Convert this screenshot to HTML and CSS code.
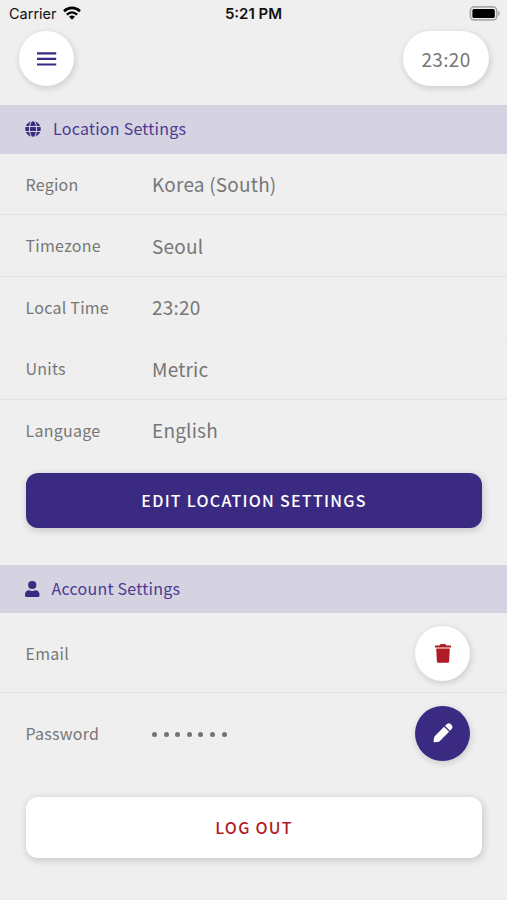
FILE: index.html
```html
<!DOCTYPE html>
<html lang="en">
<head>
<meta charset="utf-8">
<title>Settings</title>
<link rel="stylesheet" href="styles.css">
</head>
<body>
<div class="status">
  <div class="carrier"><span>Carrier</span>
    <svg class="wifi" width="18" height="14" viewBox="0 0 18 14" fill="none" stroke="#000" stroke-width="2.6"><path d="M1 5.200C5.600.8 12.400.8 17 5.200"/><path d="M3.900 8.600C7 5.700 11 5.700 14.100 8.600"/><path d="M9 13.800 6.100 10.700C7.700 9.200 10.300 9.200 11.900 10.700Z" fill="#000" stroke="none"/></svg>
  </div>
  <div class="clock">5:21 PM</div>
  <div class="power">
    <svg width="31" height="15" viewBox="0 0 31 15"><rect x="1.400" y=".9" width="26.400" height="13" rx="3.600" fill="#efefef" stroke="#a9a9a9" stroke-width="1.600"/><rect x="3.400" y="3" width="22.400" height="9" rx="1.600"/><path d="M29.200 5v5c2-.8 2-4.200 0-5z" fill="#a0a0a0"/></svg>
  </div>
</div>
<header class="topbar">
  <button class="round" aria-label="Menu"><svg width="20" height="14" viewBox="0 0 20 14" fill="#3b2a82"><path d="M0 .2h19.200v2.200H0zM0 5.800h19.200V8H0zM0 11.400h19.200v2.200H0z"/></svg></button>
  <div class="time-pill">23:20</div>
</header>
<section>
  <h2 class="band"><svg width="16" height="16" viewBox="0 0 496 512" fill="#3b2a82"><path d="M336.500 160C322 70.700 287.800 8 248 8s-74 62.700-88.500 152h177zM152 256c0 22.200 1.200 43.500 3.300 64h185.300c2.100-20.500 3.300-41.800 3.300-64s-1.200-43.500-3.300-64H155.300c-2.100 20.500-3.300 41.800-3.300 64zm324.700-96c-28.600-67.900-86.500-120.400-158-141.600 24.400 33.800 41.200 84.700 50 141.600h108zM177.200 18.400C105.800 39.600 47.800 92.100 19.300 160h108c8.700-56.900 25.500-107.800 49.900-141.600zM487.400 192H372.700c2.100 21 3.300 42.500 3.300 64s-1.200 43-3.300 64h114.600c5.500-20.500 8.600-41.800 8.600-64s-3.100-43.500-8.500-64zM120 256c0-21.500 1.200-43 3.300-64H8.600C3.200 212.500 0 233.800 0 256s3.200 43.500 8.600 64h114.600c-2-21-3.200-42.500-3.200-64zm39.500 96c14.500 89.300 48.700 152 88.500 152s74-62.700 88.500-152h-177zm159.300 141.600c71.400-21.200 129.400-73.700 158-141.600h-108c-8.800 56.900-25.600 107.800-50 141.600zM19.300 352c28.600 67.900 86.500 120.400 158 141.600-24.400-33.800-41.200-84.700-50-141.600h-108z"/></svg><span>Location Settings</span></h2>
  <dl class="rows">
    <div class="row"><dt>Region</dt><dd>Korea (South)</dd></div>
    <div class="row"><dt>Timezone</dt><dd>Seoul</dd></div>
    <div class="row faint"><dt>Local Time</dt><dd>23:20</dd></div>
    <div class="row"><dt>Units</dt><dd>Metric</dd></div>
    <div class="row last"><dt>Language</dt><dd>English</dd></div>
  </dl>
  <button class="wide primary">EDIT LOCATION SETTINGS</button>
</section>
<section class="account">
  <h2 class="band person"><svg width="14.500" height="16" viewBox="0 0 14 16" preserveAspectRatio="none" fill="#3b2a82"><circle cx="7" cy="4" r="4"/><path d="M4 9.200c1.800.9 4.200.9 6 0 2.500 0 4 1.800 4 4v1.300c0 .9-.6 1.500-1.500 1.500h-11C.6 16 0 15.400 0 14.500v-1.300c0-2.200 1.500-4 4-4z"/></svg><span>Account Settings</span></h2>
  <dl class="rows tall">
    <div class="row"><dt>Email</dt><dd></dd><button class="round" aria-label="Delete"><svg width="16" height="19" viewBox="0 0 16 19" fill="#b01c26"><path d="M0 1.400h4.600L5.700.1h4.600l1.100 1.300H16v2.200H0zM1.200 4.400h13.600l-.7 12.900c-.1 1-.7 1.500-1.600 1.500h-9c-.9 0-1.500-.5-1.600-1.500z"/></svg></button></div>
    <div class="row last"><dt>Password</dt><dd class="dots"><i></i><i></i><i></i><i></i><i></i><i></i><i></i></dd><button class="round dark" aria-label="Edit"><svg width="20" height="20" viewBox="0 0 20 20" fill="#fff"><path d="M11.100 3.700 16.100 8.700 6.900 17.900Q6 18.800 4.800 19L1.600 19.300Q.5 19.300.6 18.200L1 15Q1.100 13.800 2 12.900zM12 2.800 13.700 1.200Q15.800-.5 17.800 1.200L18.600 2Q20.300 4 18.600 6.100L17 7.800z"/></svg></button></div>
  </dl>
  <button class="wide logout">LOG OUT</button>
</section>
</body>
</html>
```
FILE: styles.css
```css
* { box-sizing: border-box; }
body { margin: 0; width: 507px; height: 900px; overflow: hidden; background: #efefef; color: #777; font-family: "Noto Sans CJK JP", "Noto Sans", sans-serif; }
button { border: 0; padding: 0; font: inherit; }
h2, dl, dt, dd { margin: 0; font-weight: 400; }
svg { display: block; flex: none; }
.status { height: 31px; padding: 0 7px 4px 9px; display: grid; grid-template-columns: 1fr auto 1fr; align-items: center; color: #111; font: 14.500px Inter, sans-serif; }
.carrier { display: flex; align-items: center; gap: 6px; }
.wifi { margin-top: -1px; }
.clock { font-weight: 600; font-size: 15px; margin-left: -2px; }
.power { display: flex; justify-content: flex-end; }
.topbar { height: 74px; padding: 0 18px 0 19px; display: flex; justify-content: space-between; align-items: flex-start; }
.round { width: 55px; height: 55px; flex: none; border-radius: 50%; background: #fff; display: flex; align-items: center; justify-content: center; box-shadow: 1px 2px 7px rgba(0,0,0,.16); }
.round.dark { background: #3b2a82; }
.time-pill { width: 86px; height: 55px; border-radius: 28px; background: #fff; display: flex; align-items: center; justify-content: center; font-size: 19px; letter-spacing: .3px; box-shadow: 1px 2px 7px rgba(0,0,0,.16); }
.band { height: 48.500px; padding-left: 25px; display: flex; align-items: center; gap: 12px; background: #d5d2e1; color: #4b3a91; font-size: 16px; letter-spacing: .25px; }
.band span { padding-bottom: 2px; }
.row { height: 61.500px; padding: 0 37px 0 25px; display: flex; align-items: center; border-bottom: 1px solid #e2e2e2; }
.row.faint { border-color: #ebebeb; }
.row.last { border-bottom-color: transparent; }
dt { width: 127px; padding-left: .500px; font-size: 16px; letter-spacing: .25px; }
dd { flex: 1; font-size: 19px; letter-spacing: .2px; }
.wide { display: block; width: 456px; margin-left: 26px; padding-bottom: 2px; border-radius: 12px; font-size: 16px; font-weight: 500; letter-spacing: 1.270px; box-shadow: 1px 2px 7px 1px rgba(0,0,0,.15); }
.primary { height: 55px; margin-top: 12px; background: #3b2a82; color: #fff; }
.account { margin-top: 36.500px; }
.tall .row { height: 80px; }
.tall .round { margin-top: 1px; }
.dots { display: flex; gap: 6.600px; padding-top: 4px; }
.dots i { width: 5px; height: 5px; border-radius: 50%; background: #737373; }
.logout { height: 61px; margin-top: 24px; background: #fff; color: #b01c26; }
```
